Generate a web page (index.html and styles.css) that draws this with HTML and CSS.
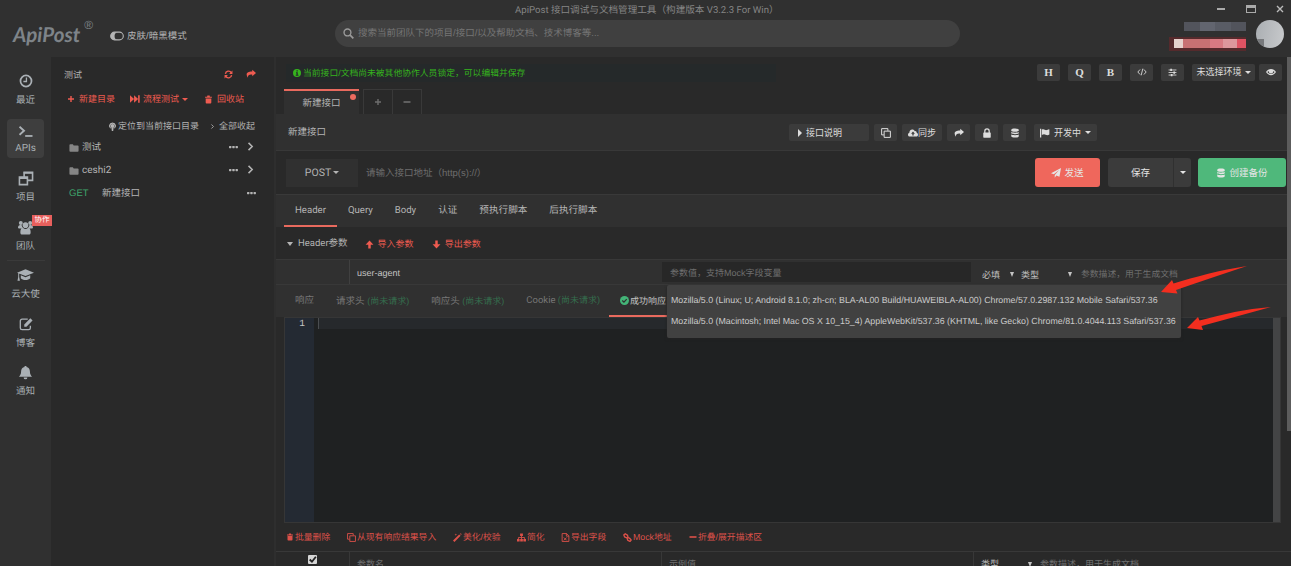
FILE: index.html
```html
<!DOCTYPE html>
<html lang="zh-CN">

<head>
  <meta charset="UTF-8">
  <meta name="viewport" content="width=device-width, initial-scale=1.0">
  <title>ApiPost</title>
  <link rel="stylesheet" href="styles.css">
</head>

<body>
  <!-- 图标 -->
  <svg class="sprite">
    <symbol id="i-clock" viewBox="0 0 16 16"><circle cx="8" cy="8" r="6.3" fill="none" stroke="currentColor" stroke-width="2"/><path d="M8.5 4v4.6H5" fill="none" stroke="currentColor" stroke-width="1.5"/></symbol>
    <symbol id="i-term" viewBox="0 0 16 16"><path d="M0 2l5.500 5L0 12" fill="none" stroke="currentColor" stroke-width="2.400"/><path d="M7 13.500H16" stroke="currentColor" stroke-width="2.200"/></symbol>
    <symbol id="i-project" viewBox="0 0 16 16"><path d="M6 8V1.5h9V10H10M1 6.5h8.500V14.500H1z" fill="none" stroke="currentColor" stroke-width="1.700"/><path d="M5.500 2h10M1 7.500h9" stroke="currentColor" stroke-width="2"/></symbol>
    <symbol id="i-team" viewBox="0 0 16 16"><circle cx="3" cy="3.200" r="2.100"/><circle cx="13" cy="3.200" r="2.100"/><circle cx="8" cy="5.500" r="3"/><path d="M0 8.500c0-3 2-3.500 4-2.800C4.200 7.500 5 8 5.500 8.800L3 9H1zM16 8.500c0-3-2-3.500-4-2.800-.2 1.800-1 2.300-1.500 3.100L13 9h2zM2.500 13c0-3 1-4.500 3-4.500 1.500 1.300 3.500 1.300 5 0 2 0 3 1.500 3 4.500 0 2-1 2.500-2 2.500h-7c-1 0-2-.5-2-2.500z"/></symbol>
    <symbol id="i-cap" viewBox="0 0 18 14"><path d="M9 1l9 3.500-9 3.500-9-3.500zM4 7.300l5 2 5-2v3.200c-2 2.500-8 2.500-10 0zM1.300 5h1v4l.8 4H.5l.8-4z"/></symbol>
    <symbol id="i-edit" viewBox="0 0 16 16"><path d="M10 2.500H3.500a2 2 0 0 0-2 2v8a2 2 0 0 0 2 2h7.500a2 2 0 0 0 2-2V10" fill="none" stroke="currentColor" stroke-width="1.500"/><path d="M6 8.500L13 1.500l2.500 2.500-7 7H6z"/></symbol>
    <symbol id="i-bell" viewBox="0 0 16 16"><path d="M7 1h2v1c2.500.5 3.700 2.300 3.700 5 0 3 1 4 2.300 5.500H1C2.300 11 3.300 10 3.300 7c0-2.700 1.200-4.500 3.700-5zM6 13.300h4a2 2 0 0 1-4 0z"/></symbol>
    <symbol id="i-toggle" viewBox="0 0 20 13"><rect x="1" y="1" width="18" height="11" rx="5.500" fill="none" stroke="currentColor" stroke-width="1.600"/><path d="M6.500 1H12a5.500 5.500 0 0 0 0 11H6.500a5.500 5.500 0 0 1 0-11z"/></symbol>
    <symbol id="i-search" viewBox="0 0 16 16"><circle cx="6.500" cy="6.500" r="5" fill="none" stroke="currentColor" stroke-width="2"/><path d="M10 10l5 5" stroke="currentColor" stroke-width="2.500"/></symbol>
    <symbol id="i-refresh" viewBox="0 0 16 16"><path d="M2.500 7A5.600 5.600 0 0 1 13 5M13.500 9A5.600 5.600 0 0 1 3 11" fill="none" stroke="currentColor" stroke-width="2.400"/><path d="M15 1v6H9zM1 15V9h6z"/></symbol>
    <symbol id="i-share" viewBox="0 0 16 16"><path d="M10 1l6 5.500-6 5V9C5 8.500 3 10 3 14 -.5 9 0 4 10 4z"/></symbol>
    <symbol id="i-plus" viewBox="0 0 16 16"><path d="M8 2v12M2 8h12" stroke="currentColor" stroke-width="2.800"/></symbol>
    <symbol id="i-minus" viewBox="0 0 16 16"><path d="M1 8h14" stroke="currentColor" stroke-width="3.200"/></symbol>
    <symbol id="i-ffwd" viewBox="0 0 16 16"><path d="M0 2l6.500 6L0 14zM6.500 2l6.500 6-6.500 6zM13 2h2.500v12H13z"/></symbol>
    <symbol id="i-trash" viewBox="0 0 16 16"><path d="M2 3h3.500L6 1h4l.5 2H14v2H2zM3 6h10v7.500c0 1-.5 1.500-1.500 1.500h-7c-1 0-1.500-.5-1.500-1.500z"/></symbol>
    <symbol id="i-pin" viewBox="0 0 16 16"><path d="M8 1a6.500 6 0 0 1 3 11.200V10a4 4 0 1 0-6 0v2.200A6.500 6 0 0 1 8 1z"/><circle cx="8" cy="7" r="3.600"/><path d="M6 10h4l-.8 6H6.800z"/></symbol>
    <symbol id="i-right" viewBox="0 0 16 16"><path d="M4.500 1.500L11 8l-6.500 6.500" fill="none" stroke="currentColor" stroke-width="2.700"/></symbol>
    <symbol id="i-folder" viewBox="0 0 16 14"><path d="M0 2c0-1 .5-1.500 1.500-1.500H6l1.500 2h7c1 0 1.500.5 1.500 1.500v8c0 1-.5 1.500-1.500 1.500h-13C.5 13.500 0 13 0 12z"/></symbol>
    <symbol id="i-dots" viewBox="0 0 16 6"><rect x="0" y="1" width="4.300" height="4" rx="1"/><rect x="5.800" y="1" width="4.300" height="4" rx="1"/><rect x="11.600" y="1" width="4.300" height="4" rx="1"/></symbol>
    <symbol id="i-info" viewBox="0 0 16 16"><path fill-rule="evenodd" d="M8 0a8 8 0 1 0 0 16A8 8 0 0 0 8 0zM7 2.500h2.500V5H7zM6 6.300h3.500v5H11v2H5.500v-2H7v-3H6z"/></symbol>
    <symbol id="i-code" viewBox="0 0 18 16"><path d="M5.500 3.500L1.500 8l4 4.500M12.500 3.500l4 4.500-4 4.500M10.500 2l-3 12" fill="none" stroke="currentColor" stroke-width="1.600"/></symbol>
    <symbol id="i-sliders" viewBox="0 0 16 16"><path d="M1 3.500h14M1 8h14M1 12.500h14" stroke="currentColor" stroke-width="1.500"/><path d="M4 1.500h3v4H4zM9.500 6h3v4h-3zM5 10.500h3v4H5z"/></symbol>
    <symbol id="i-eye" viewBox="0 0 18 14"><path fill-rule="evenodd" d="M0 7c4-7.500 14-7.500 18 0-4 7.500-14 7.500-18 0zm5-1.500a4 4 0 1 0 8 0c2 .8 2.500 1.500 2.500 1.500-3 4.500-10 4.500-13 0 0 0 .5-.7 2.500-1.500z"/><circle cx="9" cy="6" r="2.800"/></symbol>
    <symbol id="i-copy" viewBox="0 0 16 16"><path d="M5 5h10v10H5zM4.500 11H1V1h10v3.500" fill="none" stroke="currentColor" stroke-width="1.600"/></symbol>
    <symbol id="i-cloud" viewBox="0 0 18 14"><path fill-rule="evenodd" d="M4 13.500C1.500 13.500 0 12 0 10c0-1.600.9-3 2.500-3.500C2.300 3 4.500.5 7.500.5c2.300 0 4 1.200 4.700 3.200 2-.5 3.600 1 3.400 3C17 7.200 18 8.500 18 10c0 2-1.500 3.500-3.800 3.500zM9 4.500L5.500 8.300h2.300v3h2.400v-3h2.300z"/></symbol>
    <symbol id="i-lock" viewBox="0 0 16 16"><path d="M4.500 8V5a3.500 3.500 0 0 1 7 0v3" fill="none" stroke="currentColor" stroke-width="2"/><rect x="2" y="7" width="12" height="8.500" rx="1"/></symbol>
    <symbol id="i-db" viewBox="0 0 16 16"><path d="M2 3c0-3 12-3 12 0v1.500c0 2-12 2-12 0zM2 6.500c2 1.300 10 1.300 12 0v2c0 1.800-12 1.800-12 0zM2 10.500c2 1.300 10 1.300 12 0V13c0 3-12 3-12 0z"/></symbol>
    <symbol id="i-flag" viewBox="0 0 16 14"><path d="M0 0h2v14H0zM3 1.500c4-2 5 2 8 .8 2-.8 3-.8 4-1.300v8.500c-4 2.500-6-.5-8.500-.5-1.500 0-2.500.5-3.500 1z"/></symbol>
    <symbol id="i-plane" viewBox="0 0 16 16"><path d="M16 0l-2.500 14-5-2L6 15.500v-4.500L13 3 4.500 10 0 8.500z"/></symbol>
    <symbol id="i-up" viewBox="0 0 16 16"><path d="M8 1l7 7.500H10.200V15H5.800V8.500H1z"/></symbol>
    <symbol id="i-down" viewBox="0 0 16 16"><path d="M8 15L1 7.500h4.800V1h4.400v6.500H15z"/></symbol>
    <symbol id="i-check" viewBox="0 0 16 16"><circle cx="8" cy="8" r="8"/><path d="M4 8l3 3 5-5.500" fill="none" stroke="#303030" stroke-width="2.200"/></symbol>
    <symbol id="i-wand" viewBox="0 0 16 16"><path d="M0 13.500L11 2.500 13.500 5 2.500 16zM5 1l.7 1.600L7.500 3l-1.800.6L5 5l-.6-1.400L2.500 3l1.900-.4zM14 0l.5 1.300L16 2l-1.500.5L14 4l-1-3z"/></symbol>
    <symbol id="i-sitemap" viewBox="0 0 16 16"><path d="M5.500 1h5v4.500h-5zM0 10.500h4.700V15H0zM5.700 10.500h4.700V15H5.700zM11.300 10.500H16V15h-4.700z"/><path d="M8 5v6M2.500 11V8h11v3" fill="none" stroke="currentColor" stroke-width="1.500"/></symbol>
    <symbol id="i-file" viewBox="0 0 16 16"><path d="M2 1h8l4 4v10H2zM9.500 1v4.500H14M5 8l5 5M10 8l-5 5" fill="none" stroke="currentColor" stroke-width="1.600"/></symbol>
    <symbol id="i-link" viewBox="0 0 16 16"><path d="M7 8.500L3 7 1.500 3.500 4 1.500l4 2.500 1 4 3 1.500 2.500 3-2 2.500-4-2z" fill="none" stroke="currentColor" stroke-width="2.400"/></symbol>
  </svg>

  <header class="header">
    <div class="titlebar">
      <span class="app-title">ApiPost 接口调试与文档管理工具（构建版本 V3.2.3 For Win）</span>
      <div class="win-btns"><i class="win-min"></i><i class="win-max"></i><svg class="win-close" viewBox="0 0 8 8"><path d="M1 1l6 6M7 1L1 7" stroke="currentColor" stroke-width="1.400"/></svg></div>
    </div>
    <div class="topbar">
      <div class="logo">ApiPost<sup>®</sup></div>
      <div class="skin"><svg class="ico toggle"><use href="#i-toggle"/></svg><span>皮肤/暗黑模式</span></div>
      <div class="search"><svg class="ico s11"><use href="#i-search"/></svg><span>搜索当前团队下的项目/接口/以及帮助文档、技术博客等...</span></div>
      <div class="user">
        <div class="mosaic">
          <div class="mosaic-row gray"><i></i><i></i><i></i><i></i></div>
          <div class="mosaic-row red"><i></i><i></i><i></i><i></i><i></i><i></i></div>
        </div>
        <div class="avatar"><i></i></div>
      </div>
    </div>
  </header>

  <div class="wrap">
    <nav class="side">
      <a class="side-item"><svg class="ico s14"><use href="#i-clock"/></svg><span>最近</span></a>
      <a class="side-item active"><svg class="ico s13"><use href="#i-term"/></svg><span class="latin">APIs</span></a>
      <a class="side-item"><svg class="ico s16"><use href="#i-project"/></svg><span>项目</span></a>
      <a class="side-item"><svg class="ico s15"><use href="#i-team"/></svg><span>团队</span><em class="badge">协作</em></a>
      <a class="side-item line"><svg class="ico s17"><use href="#i-cap"/></svg><span>云大使</span></a>
      <a class="side-item"><svg class="ico s14"><use href="#i-edit"/></svg><span>博客</span></a>
      <a class="side-item"><svg class="ico s15"><use href="#i-bell"/></svg><span>通知</span></a>
    </nav>

    <aside class="panel">
      <div class="panel-head"><span>测试</span><svg class="ico s9"><use href="#i-refresh"/></svg><svg class="ico s10"><use href="#i-share"/></svg></div>
      <div class="panel-tools">
        <a class="t-new"><svg class="ico s8"><use href="#i-plus"/></svg>新建目录</a>
        <a class="t-flow"><svg class="ico s10"><use href="#i-ffwd"/></svg>流程测试<i class="caret"></i></a>
        <a class="t-bin"><svg class="ico s9"><use href="#i-trash"/></svg>回收站</a>
      </div>
      <div class="panel-sub"><svg class="ico s9"><use href="#i-pin"/></svg><span>定位到当前接口目录</span><svg class="ico s5"><use href="#i-right"/></svg><span>全部收起</span></div>
      <ul class="tree">
        <li><svg class="ico folder"><use href="#i-folder"/></svg><span>测试</span><svg class="ico dots"><use href="#i-dots"/></svg><svg class="ico s9"><use href="#i-right"/></svg></li>
        <li><svg class="ico folder"><use href="#i-folder"/></svg><span class="latin">ceshi2</span><svg class="ico dots"><use href="#i-dots"/></svg><svg class="ico s9"><use href="#i-right"/></svg></li>
        <li><b class="get">GET</b><span>新建接口</span><svg class="ico dots last"><use href="#i-dots"/></svg></li>
      </ul>
    </aside>

    <main class="main">
      <div class="notice-row">
        <div class="notice"><svg class="ico s8"><use href="#i-info"/></svg><span>当前接口/文档尚未被其他协作人员锁定，可以编辑并保存</span></div>
        <div class="quick">
          <button class="btn serif">H</button>
          <button class="btn serif">Q</button>
          <button class="btn serif">B</button>
          <button class="btn"><svg class="ico s10"><use href="#i-code"/></svg></button>
          <button class="btn"><svg class="ico s9"><use href="#i-sliders"/></svg></button>
          <button class="btn env">未选择环境<i class="caret"></i></button>
          <button class="btn eye"><svg class="ico s10"><use href="#i-eye"/></svg></button>
        </div>
      </div>

      <div class="page-tabs">
        <div class="page-tab active">新建接口<i class="dot"></i></div>
        <div class="page-tab small"><svg class="ico s8"><use href="#i-plus"/></svg></div>
        <div class="page-tab small second"><svg class="ico s8"><use href="#i-minus"/></svg></div>
      </div>

      <div class="name-row">
        <span class="name">新建接口</span>
        <button class="btn desc"><i class="play"></i>接口说明</button>
        <button class="btn"><svg class="ico s10"><use href="#i-copy"/></svg></button>
        <button class="btn sync"><svg class="ico s10"><use href="#i-cloud"/></svg>同步</button>
        <button class="btn"><svg class="ico s10"><use href="#i-share"/></svg></button>
        <button class="btn"><svg class="ico s10"><use href="#i-lock"/></svg></button>
        <button class="btn"><svg class="ico s10"><use href="#i-db"/></svg></button>
        <button class="btn state"><svg class="ico s10"><use href="#i-flag"/></svg>开发中<i class="caret"></i></button>
      </div>

      <div class="url-row">
        <div class="method latin">POST<i class="caret"></i></div>
        <div class="url">请输入接口地址（http(s)://）</div>
        <button class="big send"><svg class="ico s10"><use href="#i-plane"/></svg>发送</button>
        <button class="big save">保存</button>
        <button class="big more"><i class="caret"></i></button>
        <button class="big create"><svg class="ico s10"><use href="#i-db"/></svg>创建备份</button>
      </div>

      <div class="req-tabs latin">
        <a class="active">Header</a><a>Query</a><a>Body</a><a>认证</a><a>预执行脚本</a><a>后执行脚本</a>
      </div>

      <div class="param-head">
        <i class="caret big-caret"></i><span class="latin">Header参数</span>
        <a class="imp"><svg class="ico s9"><use href="#i-up"/></svg>导入参数</a>
        <a class="exp"><svg class="ico s9"><use href="#i-down"/></svg>导出参数</a>
      </div>

      <div class="param-row">
        <div class="cell-first"></div>
        <div class="cell-key">user-agent</div>
        <div class="cell-value">参数值，支持Mock字段变量
          <ul class="ua-menu">
            <li>Mozilla/5.0 (Linux; U; Android 8.1.0; zh-cn; BLA-AL00 Build/HUAWEIBLA-AL00) Chrome/57.0.2987.132 Mobile Safari/537.36</li>
            <li>Mozilla/5.0 (Macintosh; Intel Mac OS X 10_15_4) AppleWebKit/537.36 (KHTML, like Gecko) Chrome/81.0.4044.113 Safari/537.36</li>
          </ul>
        </div>
        <div class="sel must">必填<i class="tri"></i></div>
        <div class="sel type">类型<i class="tri"></i></div>
        <span class="hint">参数描述，用于生成文档</span>
      </div>

      <div class="res-tabs">
        <a>响应</a>
        <a>请求头 <em>(尚未请求)</em></a>
        <a>响应头 <em>(尚未请求)</em></a>
        <a class="latin">Cookie <em>(尚未请求)</em></a>
        <a class="active"><svg class="ico s9"><use href="#i-check"/></svg>成功响应</a>
      </div>

      <div class="editor">
        <div class="gutter">1</div>
        <div class="code"><div class="code-line"></div></div>
        <div class="code-bar"></div>
      </div>

      <div class="links">
        <a><svg class="ico s8"><use href="#i-trash"/></svg>批量删除</a>
        <a><svg class="ico s9"><use href="#i-copy"/></svg>从现有响应结果导入</a>
        <a><svg class="ico s9"><use href="#i-wand"/></svg>美化/校验</a>
        <a><svg class="ico s9"><use href="#i-sitemap"/></svg>简化</a>
        <a><svg class="ico s9"><use href="#i-file"/></svg>导出字段</a>
        <a><svg class="ico s9"><use href="#i-link"/></svg>Mock地址</a>
        <a><svg class="ico s8"><use href="#i-minus"/></svg>折叠/展开描述区</a>
      </div>

      <div class="field-row">
        <div class="f-check"><i><svg viewBox="0 0 8 8"><path d="M1.500 4l2 2L7 1.500" fill="none" stroke="#222" stroke-width="1.600"/></svg></i></div>
        <div class="f-name">参数名</div>
        <div class="f-value">示例值</div>
        <div class="f-type">类型<i class="tri"></i></div>
        <div class="f-desc">参数描述，用于生成文档</div>
      </div>
      <div class="page-bar"></div>
    </main>
  </div>

  <!-- 红色标注箭头 -->
  <svg class="arrows" viewBox="0 0 120 80">
    <path d="M11 32L22 20 23.500 23.500C45 17 70 10 97 6 73 14 49 22 26 30L27.500 33.500z"/>
    <path d="M37 68L48 57 49.500 60.500C74 54 95 49 121 47 98 53 75 60 51.500 66L53 70z"/>
  </svg>
</body>

</html>
```

FILE: styles.css
```css
* {
  padding: 0;
  margin: 0;
  box-sizing: border-box;
}

body {
  width: 1291px;
  height: 566px;
  overflow: hidden;
  position: relative;
  background: #303030;
  color: #b4b4b4;
  font: 9.5px/14px "Liberation Sans", "Noto Sans CJK SC", sans-serif;
  text-rendering: geometricPrecision;
  white-space: nowrap;
}

ul {
  list-style: none;
}

em,
i {
  font-style: normal;
}

button {
  border: 0;
  font: inherit;
  color: inherit;
}

.latin {
  font-family: Roboto, "Noto Sans CJK SC", sans-serif;
}

.sprite {
  display: none;
}

.ico {
  flex: none;
  fill: currentColor;
}

.s5 { width: 5px; height: 7px; }
.s8 { width: 8px; height: 8px; }
.s9 { width: 9px; height: 9px; }
.s10 { width: 10px; height: 10px; }
.s11 { width: 11px; height: 11px; }
.s13 { width: 14px; height: 13px; }
.s14 { width: 14px; height: 14px; }
.s15 { width: 15px; height: 15px; }
.s16 { width: 16px; height: 15px; }
.s17 { width: 17px; height: 14px; }

.caret {
  border: 3px solid transparent;
  border-top: 3px solid currentColor;
  border-bottom: 0;
}

.tri {
  border: 2.5px solid transparent;
  border-top: 5px solid #c4c4c4;
  border-bottom: 0;
}

/* 顶部 */
.header {
  height: 57px;
}

.titlebar {
  height: 20px;
  display: flex;
  align-items: center;
  padding: 0 7px 0 515px;
  color: #858585;
}

.app-title {
  padding-top: 2px;
  font-family: Roboto, "Noto Sans CJK SC", sans-serif;
  font-size: 9.6px;
}

.win-btns {
  display: flex;
  align-items: center;
  margin: -2px 0 0 auto;
  color: #bbb;
}

.win-min {
  width: 8px;
  height: 2px;
  background: #aaa;
}

.win-max {
  width: 10px;
  height: 8px;
  margin: 0 20px 0 21px;
  border: 1px solid #aaa;
  border-top-width: 3px;
}

.win-close {
  width: 8px;
  height: 8px;
}

.topbar {
  height: 37px;
  display: flex;
}

.logo {
  width: 110px;
  padding: 5px 0 0 13px;
  font: italic bold 20.5px/20px Lato, sans-serif;
  color: #7e8489;
}

.logo sup {
  position: relative;
  top: -5px;
  margin-left: 4px;
  font: 12px/8px "Liberation Sans", sans-serif;
}

.skin {
  width: 225px;
  height: 32px;
  display: flex;
  align-items: center;
}

.skin span {
  padding-top: 1px;
}

.toggle {
  width: 14px;
  height: 10px;
  margin-right: 3px;
}

.search {
  width: 625px;
  height: 27px;
  display: flex;
  align-items: center;
  padding-left: 8px;
  border-radius: 14px;
  background: #404040;
  color: #757575;
}

.search .ico {
  color: #9a9a9a;
  margin-right: 4px;
}

.search span {
  padding-top: 1px;
}

.user {
  display: flex;
  margin-left: auto;
  padding-right: 7px;
}

.mosaic {
  width: 85px;
  padding-top: 2px;
}

.mosaic-row {
  display: flex;
}

.mosaic-row i {
  flex: 1;
}

.gray {
  height: 9px;
  margin: 0 8px 6px 15px;
}

.gray i { background: #52545c; }
.gray i:nth-child(2) { background: #62656f; }
.gray i:nth-child(3) { background: #595c65; }

.red {
  height: 14px;
  margin: 0 8px 0 0;
  padding: 2px 0 3px 5px;
  background: #552a2c;
}

.red i { background: #c77173; }
.red i:first-child { background: #e6d2cd; flex: .7; }
.red i:nth-child(4) { background: #d87a82; }
.red i:nth-child(5) { background: #dd979c; }
.red i:last-child { background: #df5363; flex: .7; }

.avatar {
  width: 28px;
  height: 28px;
  margin-left: 2px;
  border-radius: 50%;
  overflow: hidden;
  background: linear-gradient(100deg, #aaaeb2, #c8cacc);
}

.avatar i {
  display: block;
  width: 8px;
  height: 9px;
  margin-top: 19px;
  background: #77797c;
}

.wrap {
  display: flex;
  height: 509px;
}

/* 左侧菜单 */
.side {
  width: 51px;
  padding: 13px 7px 0;
}

.side-item {
  position: relative;
  height: 39px;
  margin-bottom: 9.5px;
  display: flex;
  flex-direction: column;
  align-items: center;
  justify-content: space-between;
  padding: 4px 0 1px;
  border-radius: 4px;
  color: #aab0b5;
}

.side-item.active {
  background: #3e3e3e;
  padding: 6px 0 2px;
}

.side-item .latin {
  font-size: 10px;
}

.side-item.line::before {
  content: "";
  width: 38px;
  border-top: 1px solid #3a3a3a;
  position: absolute;
  top: -4px;
}

.badge {
  position: absolute;
  left: 25px;
  top: -1px;
  width: 20px;
  height: 11px;
  background: #e8605d;
  color: #fff;
  font-size: 7.5px;
  line-height: 10px;
  text-align: center;
}

/* 目录 */
.panel {
  width: 225px;
  padding: 9px 0 0 13px;
  background: #292929;
  border-right: 2px solid #2e2e2e;
}

.panel-head,
.panel-tools,
.panel-sub {
  height: 18px;
  display: flex;
  align-items: center;
}

.panel-head {
  width: 192px;
  font-size: 9px;
}

.panel-head span {
  margin-right: auto;
}

.panel-head .ico {
  color: #ee5b50;
  margin: -2px 0 0 13px;
}

.panel-tools {
  margin-top: 6px;
  display: grid;
  grid-template-columns: 63px 74px 60px;
  padding-left: 3px;
  color: #ee5b50;
  font-size: 9px;
}

.panel-tools a {
  display: flex;
  align-items: center;
  gap: 4px;
}

.panel-tools .t-flow {
  gap: 3px;
}

.panel-sub {
  margin-top: 9px;
  padding-left: 44px;
  font-size: 9px;
}

.panel-sub .s9 {
  margin-right: 1px;
}

.panel-sub .s5 {
  margin: 0 4px 0 11px;
}

.tree {
  padding: 1px 19px 0 5px;
}

.tree li {
  height: 23px;
  display: flex;
  align-items: center;
}

.tree .latin {
  font-size: 10px;
}

.folder {
  width: 10px;
  height: 8px;
  margin-right: 3px;
  color: #858585;
}

.dots {
  width: 9px;
  height: 4px;
  margin: -2px 8px 0 auto;
}

.tree .s9 {
  margin-top: -2px;
}

.dots.last {
  margin-right: -1px;
}

.get {
  width: 33px;
  font-weight: normal;
  color: #3fa56d;
}

/* 主区域 */
.main {
  position: relative;
  width: 1015px;
  background: #292929;
}

.btn {
  height: 17px;
  width: 23px;
  flex: none;
  display: flex;
  align-items: center;
  justify-content: center;
  border-radius: 2px;
  background: #3b3b3b;
  color: #ddd;
  font-size: 9px;
}

.notice-row {
  height: 32px;
  display: flex;
  align-items: center;
  padding-left: 10px;
}

.notice {
  width: 490px;
  height: 18px;
  display: flex;
  align-items: center;
  padding-left: 7px;
  background: #25292a;
  color: #35b41d;
}

.notice span {
  font-size: 8.8px;
  margin-left: 2px;
}

.quick {
  display: flex;
  gap: 8px;
  margin: -2px 9px 0 auto;
}

.serif {
  font: bold 11px/14px "Liberation Serif", serif;
}

.btn.env {
  width: 63px;
  gap: 3px;
}

.btn.eye {
  margin-left: -4px;
}

.page-tabs {
  height: 25px;
  display: flex;
  padding-left: 8px;
}

.page-tab {
  position: relative;
  width: 75px;
  display: flex;
  align-items: center;
  justify-content: center;
}

.page-tab.active {
  padding-top: 2px;
  border-top: 2px solid #e96a5e;
  background: #303030;
}

.dot {
  position: absolute;
  right: 3px;
  top: 3px;
  width: 6px;
  height: 6px;
  border-radius: 50%;
  background: #ec6b5f;
}

.page-tab.small {
  width: 30px;
  margin-left: 4px;
  border: 1px solid #393939;
  border-bottom: 0;
  color: #6d6d6d;
}

.page-tab.second {
  margin-left: -1px;
}

.name-row {
  height: 37px;
  display: flex;
  align-items: center;
  padding: 1px 194px 0 12px;
  background: #303030;
  border-bottom: 1px solid #383838;
  gap: 5px;
}

.name {
  margin-right: auto;
  padding-top: 1px;
}

.btn.desc {
  width: 80px;
  justify-content: flex-start;
  padding-left: 9px;
}

.play {
  border: 4px solid transparent;
  border-left: 4px solid #ddd;
  border-right: 0;
  margin-right: 4px;
}

.btn.sync {
  width: 40px;
}

.btn.state {
  width: 63px;
  gap: 4px;
  margin-left: 3px;
}

.url-row {
  height: 43px;
  display: flex;
  align-items: center;
  padding-left: 10px;
}

.method {
  width: 72px;
  height: 28px;
  display: flex;
  align-items: center;
  justify-content: center;
  gap: 2px;
  background: #303030;
  font-size: 10.5px;
}

.url {
  width: 670px;
  height: 28px;
  margin-right: 7px;
  padding: 8px 0 0 8px;
  color: #6d6d6d;
}

.big {
  height: 29px;
  display: flex;
  align-items: center;
  justify-content: center;
  gap: 3px;
  border-radius: 3px;
  background: #3b3b3b;
  color: #e5e5e5;
}

.send {
  width: 65px;
  margin-right: 8px;
  background: #ef675c;
}

.save {
  width: 65px;
  border-radius: 3px 0 0 3px;
}

.more {
  width: 18px;
  margin-right: 7px;
  border-left: 1px solid #303030;
  border-radius: 0 3px 3px 0;
}

.create {
  width: 88px;
  background: #4fb87b;
}

.req-tabs {
  height: 33px;
  display: flex;
  padding-left: 8px;
  background: #303030;
  border-top: 1px solid #393939;
  font-size: 9.6px;
}

.req-tabs a {
  padding: 9px 11px 0;
}

.req-tabs a.active {
  border-bottom: 2px solid #e96a5e;
}

.param-head {
  height: 32px;
  display: flex;
  align-items: center;
  padding: 2px 0 0 11px;
}

.big-caret {
  border-width: 4px 3px 0;
  margin-right: 5px;
}

.param-head a {
  display: flex;
  align-items: center;
  gap: 4px;
  margin-left: 17px;
  color: #ee5b50;
  font-size: 9px;
}

.param-head a.exp {
  margin-left: 18px;
}

.param-row {
  height: 26px;
  display: grid;
  grid-template-columns: 74px 313px 308px 11px 39px 60px auto;
  align-items: center;
  background: #303030;
  border-top: 1px solid #383838;
  border-bottom: 1px solid #383838;
  font-size: 9px;
}

.cell-first {
  height: 24px;
  border-right: 1px solid #404040;
}

.cell-key {
  padding: 2px 0 0 7px;
  color: #c4c4c4;
}

.cell-value {
  position: relative;
  height: 20px;
  margin-left: -1px;
  padding: 4px 0 0 8px;
  background: #272727;
  color: #6f6f6f;
}

.sel {
  display: flex;
  align-items: center;
  justify-content: space-between;
  margin-top: 5px;
  color: #c0c0c0;
}

.must {
  grid-column: 5;
  margin-right: 7px;
}

.type.sel {
  width: 51px;
}

.hint {
  margin-top: 3px;
  font-size: 8.8px;
  color: #6f6f6f;
}

.ua-menu {
  position: absolute;
  z-index: 2;
  left: 5px;
  top: 23px;
  width: 514px;
  height: 53px;
  padding: 5px 4px;
  background: #414141;
  border-radius: 2px;
  box-shadow: 0 1px 3px #222;
  color: #cbcbcb;
}

.ua-menu li {
  height: 21px;
  line-height: 21px;
  font-size: 8.82px;
}

.res-tabs {
  height: 32px;
  display: flex;
  padding-left: 8px;
  background: #303030;
  color: #777;
}

.res-tabs a {
  padding: 9px 11px 0;
}

.res-tabs em {
  color: #356d4d;
  font-size: 9px;
}

.res-tabs a.active {
  display: flex;
  width: 90px;
  margin-left: -2px;
  gap: 1px;
  color: #c2c2c2;
  font-size: 9px;
  border-bottom: 2px solid #e96a5e;
}

.res-tabs .ico {
  margin-top: 2px;
  color: #43b477;
}

.editor {
  height: 206px;
  margin: 0 10px 0 8px;
  display: flex;
  border: 1px solid #363636;
  background: #1f2122;
}

.gutter {
  width: 29px;
  padding: 0 9px;
  background: #242a33;
  color: #c5c5c5;
  text-align: right;
  font: 9.5px/12px "Liberation Mono", monospace;
}

.code {
  flex: 1;
}

.code-line {
  height: 11px;
  background: #26292c;
  border-left: 1px solid #4a4d50;
  margin-left: 4px;
}

.code-bar {
  width: 7px;
  background: #434445;
}

.links {
  height: 28px;
  display: grid;
  grid-template-columns: 61px 106px 64px 44px 62px 66px auto;
  align-items: center;
  padding-left: 10px;
  color: #dd5149;
  font-size: 8.8px;
}

.links a {
  display: flex;
  align-items: center;
  gap: 1px;
}

.field-row {
  height: 30px;
  display: grid;
  grid-template-columns: 74px 312px 312px 66px auto;
  border-top: 1px solid #383838;
  color: #6f6f6f;
  font-size: 9px;
}

.field-row div {
  padding: 5px 0 0 7px;
  border-right: 1px solid #383838;
}

.field-row .f-check {
  padding: 3px 0 0 32px;
}

.f-check i {
  display: block;
  width: 9px;
  height: 9px;
  border-radius: 1px;
  background: #d5d5d5;
}

.f-check svg {
  display: block;
}

.field-row .f-type {
  display: flex;
  border: 0;
  justify-content: space-between;
  padding-right: 8px;
  color: #bbb;
}

.f-type .tri {
  margin-top: 5px;
}

.field-row .f-desc {
  padding-left: 0;
  border: 0;
}

.page-bar {
  position: absolute;
  right: 0;
  top: 0;
  width: 4px;
  height: 374px;
  background: #5c5c5c;
}

.arrows {
  position: absolute;
  left: 1150px;
  top: 260px;
  width: 120px;
  height: 80px;
  z-index: 3;
  fill: #f32e1f;
  overflow: visible;
}
```
